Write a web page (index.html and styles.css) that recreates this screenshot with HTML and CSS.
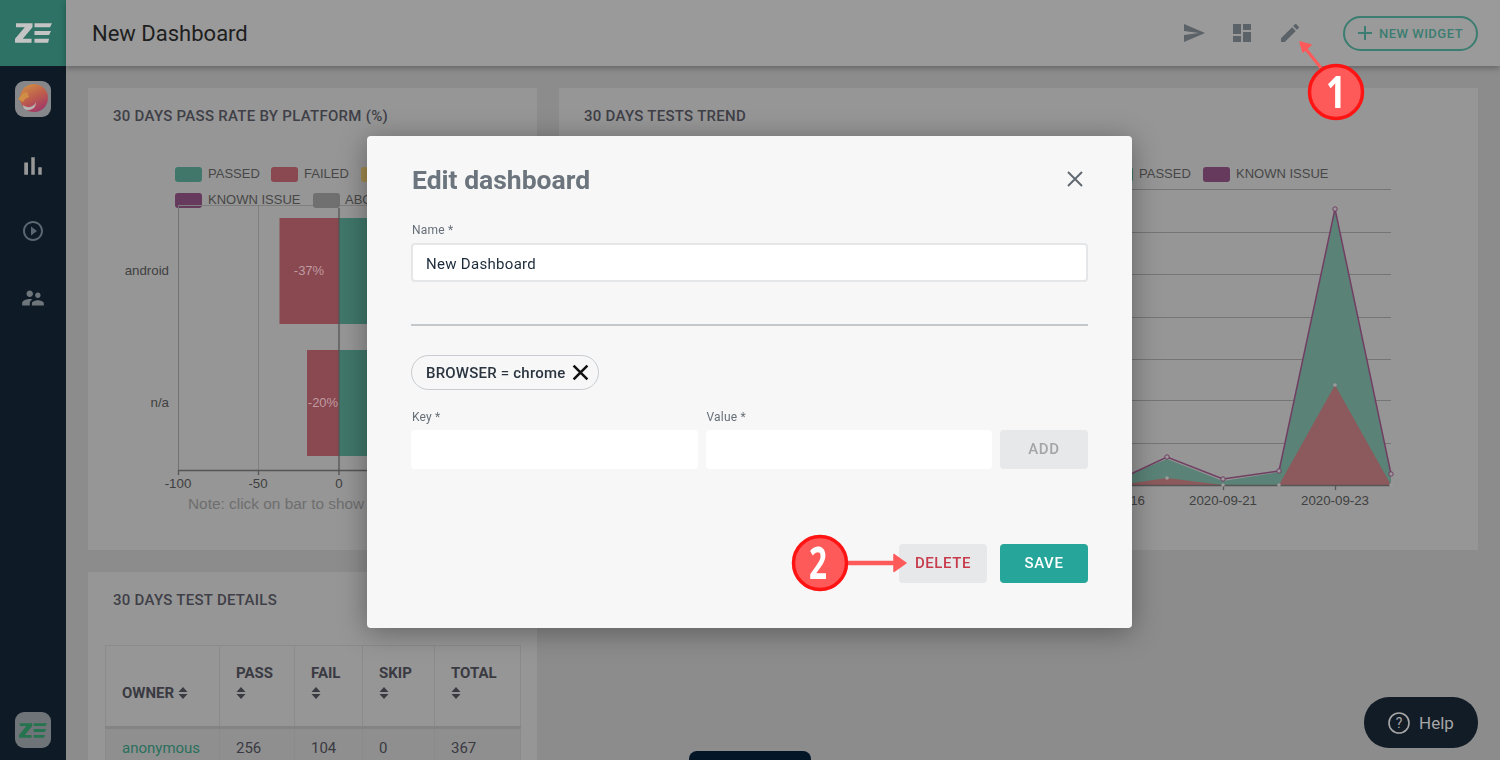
FILE: index.html
```html
<!DOCTYPE html>
<html>
<head>
    <title>New Dashboard</title>
    <link rel="stylesheet" href="styles.css">
</head>
<body>
    <aside class="sidebar">
        <div class="brand">
            <svg class="ze-logo" viewBox="0 0 38 20"><path d="M1 0h17v4L8 16h9v4H0v-4L10 4H1zM20 0h18l-2 4H20zM20 8h17l-2 4H20zM20 16h15l-1 4H20z"/></svg>
        </div>
        <div class="nav-item">
            <div class="project-logo">
                <svg viewBox="0 0 36 36">
                    <defs>
                        <linearGradient id="lion" x1="0.2" y1="0" x2="0.7" y2="1">
                            <stop offset="0" stop-color="#cf8d45"/>
                            <stop offset="0.5" stop-color="#bd5c4d"/>
                            <stop offset="1" stop-color="#9f3668"/>
                        </linearGradient>
                    </defs>
                    <circle cx="19" cy="17" r="14" fill="url(#lion)"/>
                    <path d="M3 18l5-6 4-1 2 5-4 2-2 3z" fill="#cf8d45"/>
                    <path d="M8 24c5 4 11 2 13-3 0 6-4 8-8 8-3 0-5-2-5-5z" fill="#b9b4b4"/>
                </svg>
            </div>
        </div>
        <div class="nav-item">
            <svg class="nav-icon nav-bar" viewBox="0 0 24 24"><path d="M5 9.2h3V19H5zM10.6 5h2.8v14h-2.8zm5.6 8H19v6h-2.8z"/></svg>
        </div>
        <div class="nav-item">
            <svg class="nav-icon" viewBox="0 0 24 24"><path d="M10 16.5l6-4.5-6-4.5v9zM12 2C6.48 2 2 6.48 2 12s4.48 10 10 10 10-4.48 10-10S17.52 2 12 2zm0 18c-4.41 0-8-3.59-8-8s3.59-8 8-8 8 3.59 8 8-3.59 8-8 8z"/></svg>
        </div>
        <div class="nav-item">
            <svg class="nav-icon nav-people" viewBox="0 0 24 24"><path d="M16.5 12c1.38 0 2.49-1.12 2.49-2.5S17.88 7 16.5 7C15.12 7 14 8.12 14 9.5s1.12 2.5 2.5 2.5zM9 11c1.66 0 2.99-1.34 2.99-3S10.66 5 9 5C7.34 5 6 6.34 6 8s1.34 3 3 3zm7.5 3c-1.83 0-5.5.92-5.5 2.75V19h11v-2.25c0-1.83-3.67-2.75-5.5-2.75zM9 13c-2.33 0-7 1.17-7 3.5V19h7v-2.25c0-.85.33-2.34 2.37-3.47C10.5 13.1 9.66 13 9 13z"/></svg>
        </div>
        <div class="company-logo">
            <svg viewBox="0 0 38 20"><path d="M1 0h17v4L8 16h9v4H0v-4L10 4H1zM20 0h18l-2 4H20zM20 8h17l-2 4H20zM20 16h15l-1 4H20z"/></svg>
        </div>
    </aside>

    <div class="main">
        <header class="topbar">
            <h1>New Dashboard</h1>
            <div class="topbar-actions">
                <svg class="action-icon" viewBox="0 0 24 24"><path d="M2.01 21L23 12 2.01 3 2 10l15 2-15 2z"/></svg>
                <svg class="action-icon" viewBox="0 0 24 24"><path d="M3 13h8V3H3v10zm0 8h8v-6H3v6zm10 0h8V11h-8v10zm0-18v6h8V3h-8z"/></svg>
                <svg class="action-icon" viewBox="0 0 24 24"><path d="M3 17.25V21h3.75L17.81 9.94l-3.75-3.75L3 17.25zM20.71 7.04c.39-.39.39-1.02 0-1.41l-2.34-2.34c-.39-.39-1.02-.39-1.41 0l-1.83 1.83 3.75 3.75 1.83-1.83z"/></svg>
                <button class="new-widget">
                    <svg viewBox="0 0 16 16"><path d="M8 1v14M1 8h14"/></svg>
                    NEW WIDGET
                </button>
            </div>
        </header>

        <div class="grid">
            <section class="card">
                <h2>30 days pass rate by platform (%)</h2>
                <svg class="chart" viewBox="88 140 449 400">
                    <g class="legend-text">
                        <rect x="175" y="167" width="27" height="15" rx="3" fill="#40776a"/>
                        <text x="208" y="178">PASSED</text>
                        <rect x="271" y="167" width="27" height="15" rx="3" fill="#8a4850"/>
                        <text x="304" y="178">FAILED</text>
                        <rect x="361" y="167" width="27" height="15" rx="3" fill="#a08a4d"/>
                        <rect x="175" y="193" width="27" height="15" rx="3" fill="#653a5c"/>
                        <text x="208" y="204">KNOWN ISSUE</text>
                        <text x="345" y="204">ABORTED</text>
                    </g>
                    <path class="grid-soft" d="M178 205.5H400M258.5 205V470"/>
                    <path class="grid-mid" d="M178.5 205V470"/>
                    <rect x="279.5" y="218" width="60" height="106" fill="#8a4850"/>
                    <rect x="339" y="218" width="40" height="106" fill="#40776a"/>
                    <rect x="307" y="350" width="32" height="106" fill="#8a4850"/>
                    <rect x="339" y="350" width="40" height="106" fill="#40776a"/>
                    <rect x="313" y="193" width="27" height="15" rx="3" fill="#707070"/>
                    <path class="axis" d="M339 208V470M178 470.5H400M178.5 470V475M258.5 470V475M339 470V475"/>
                    <g class="axis-text">
                        <text class="end" x="169" y="275">android</text>
                        <text class="end" x="169" y="407">n/a</text>
                        <text class="mid" x="178" y="488">-100</text>
                        <text class="mid" x="258" y="488">-50</text>
                        <text class="mid" x="339" y="488">0</text>
                    </g>
                    <text class="bar-label mid" x="309" y="275">-37%</text>
                    <text class="bar-label mid" x="323" y="407">-20%</text>
                    <text class="note" x="188" y="509">Note: click on bar to show details</text>
                </svg>
            </section>

            <section class="card">
                <h2>30 days tests trend</h2>
                <svg class="chart" viewBox="559 140 919 400">
                    <g class="legend-text">
                        <rect x="1106" y="167" width="27" height="15" rx="3" fill="#40776a"/>
                        <text x="1139" y="178">PASSED</text>
                        <rect x="1203" y="167" width="27" height="15" rx="3" fill="#653a5c"/>
                        <text x="1236" y="178">KNOWN ISSUE</text>
                    </g>
                    <path class="grid-line" d="M620 189.5H1391M620 232.5H1391M620 274.5H1391M620 317.5H1391M620 359.5H1391M620 400.5H1391M620 443.5H1391"/>
                    <polygon points="1110,485 1110,481 1133,473 1167,459 1223,481 1279,472 1335,211 1391,476 1391,485" fill="#5a8276"/>
                    <polygon points="1110,485 1133,483 1167,478 1223,485 1279,485 1335,385 1391,485" fill="#8c5a5c"/>
                    <polyline class="trend-line" points="1110,481 1133,473 1167,457 1223,479 1279,471 1335,209 1391,474"/>
                    <path class="axis" d="M1100 485.5H1391M1223.5 485V490M1335.5 485V490"/>
                    <g class="dot-known">
                        <circle cx="1167" cy="457" r="2.2"/>
                        <circle cx="1223" cy="479" r="2.2"/>
                        <circle cx="1279" cy="471" r="2.2"/>
                        <circle cx="1335" cy="209" r="2.2"/>
                        <circle cx="1391" cy="474" r="2.2"/>
                    </g>
                    <g class="dot-plain">
                        <circle cx="1167" cy="478" r="1.8"/>
                        <circle cx="1223" cy="485" r="1.8"/>
                        <circle cx="1279" cy="485" r="1.8"/>
                        <circle cx="1335" cy="385" r="1.8"/>
                        <circle cx="1391" cy="485" r="1.8"/>
                    </g>
                    <g class="axis-text">
                        <text class="mid" x="1111" y="505">2020-09-16</text>
                        <text class="mid" x="1223" y="505">2020-09-21</text>
                        <text class="mid" x="1335" y="505">2020-09-23</text>
                    </g>
                </svg>
            </section>

            <section class="card">
                <h2>30 days test details</h2>
                <table class="details">
                    <thead>
                        <tr>
                            <th class="col-owner">OWNER <svg class="sort" viewBox="0 0 10 14"><path d="M5 1l4.5 5H.5zM5 13L.5 8h9z"/></svg></th>
                            <th class="col-pass">PASS <svg class="sort" viewBox="0 0 10 14"><path d="M5 1l4.5 5H.5zM5 13L.5 8h9z"/></svg></th>
                            <th class="col-fail">FAIL <svg class="sort" viewBox="0 0 10 14"><path d="M5 1l4.5 5H.5zM5 13L.5 8h9z"/></svg></th>
                            <th class="col-skip">SKIP <svg class="sort" viewBox="0 0 10 14"><path d="M5 1l4.5 5H.5zM5 13L.5 8h9z"/></svg></th>
                            <th class="col-total">TOTAL <svg class="sort" viewBox="0 0 10 14"><path d="M5 1l4.5 5H.5zM5 13L.5 8h9z"/></svg></th>
                        </tr>
                    </thead>
                    <tbody>
                        <tr>
                            <td class="owner">anonymous</td>
                            <td>256</td>
                            <td>104</td>
                            <td>0</td>
                            <td>367</td>
                        </tr>
                    </tbody>
                </table>
            </section>
        </div>
    </div>

    <div class="bottom-tab"></div>
    <div class="help">
        <svg viewBox="0 0 24 24"><circle cx="12" cy="12" r="10"/><text x="12" y="17" text-anchor="middle">?</text></svg>
        Help
    </div>

    <div class="modal-layer">
        <div class="modal">
            <div class="modal-head">
                <h2>Edit dashboard</h2>
                <svg class="modal-close" viewBox="0 0 16 16"><path d="M1 1l14 14M15 1L1 15"/></svg>
            </div>

            <label class="field-label name-label">Name *</label>
            <input class="text-input name-input" type="text" value="New Dashboard">

            <hr class="divider">

            <div class="chip">
                BROWSER = chrome
                <svg viewBox="0 0 16 16"><path d="M1.5 1.5l13 13M14.5 1.5l-13 13"/></svg>
            </div>

            <div class="param-row">
                <div class="param-field">
                    <label class="field-label">Key *</label>
                    <input class="text-input plain" type="text">
                </div>
                <div class="param-field">
                    <label class="field-label">Value *</label>
                    <input class="text-input plain" type="text">
                </div>
                <button class="btn btn-add">ADD</button>
            </div>

            <div class="modal-foot">
                <button class="btn btn-delete">DELETE</button>
                <button class="btn btn-save">SAVE</button>
            </div>
        </div>
    </div>

    <!-- callouts drawn on top of the screenshot -->
    <svg class="callouts" viewBox="0 0 1500 760">
        <path class="callout-line" d="M1321 68L1305 48"/>
        <path class="callout-head" d="M1300 42l11 3-8 7z"/>
        <circle class="callout-dot" cx="1336" cy="92" r="26.5"/>
        <text class="callout-num" x="1336" y="108" textLength="20" lengthAdjust="spacingAndGlyphs">1</text>
        <path class="callout-line wide" d="M847 563H896"/>
        <path class="callout-head" d="M906 563l-12-8.5v17z"/>
        <circle class="callout-dot" cx="820" cy="563" r="26.5"/>
        <text class="callout-num" x="818" y="579" textLength="18" lengthAdjust="spacingAndGlyphs">2</text>
    </svg>
</body>
</html>
```

FILE: styles.css
```css
* {
    box-sizing: border-box;
}

body {
    display: flex;
    width: 1500px;
    height: 760px;
    margin: 0;
    overflow: hidden;
    background: #8c8c8c;
    font-family: Roboto, "Liberation Sans", sans-serif;
}

/* sidebar */
.sidebar {
    display: flex;
    flex-direction: column;
    flex: 0 0 66px;
    background: #0e1a25;
}

.brand {
    display: flex;
    align-items: center;
    justify-content: center;
    height: 66px;
    background: #2e7265;
}

.ze-logo {
    width: 37px;
    height: 20px;
    fill: #c4c4c4;
}

.nav-item {
    display: flex;
    align-items: center;
    justify-content: center;
    height: 66px;
}

.nav-icon {
    width: 24px;
    height: 24px;
    fill: #5b6670;
}

.nav-bar {
    width: 30px;
    height: 30px;
    margin-top: 2px;
    fill: #989898;
}

.nav-people {
    width: 26px;
    height: 26px;
    margin-top: 2px;
    fill: #6e767b;
}

.project-logo {
    width: 36px;
    height: 36px;
    border-radius: 9px;
    background: #85878a;
}

.project-logo svg {
    display: block;
}

.company-logo {
    display: flex;
    align-items: center;
    justify-content: center;
    width: 36px;
    height: 36px;
    margin: auto 0 12px 15px;
    border-radius: 9px;
    background: #6f7478;
}

.company-logo svg {
    width: 28px;
    height: 15px;
    fill: #25734f;
}

/* top bar */
.main {
    flex: 1;
    min-width: 0;
}

.topbar {
    position: relative;
    display: flex;
    align-items: center;
    justify-content: space-between;
    height: 66px;
    padding: 0 22px 0 26px;
    background: #9a9a9a;
    box-shadow: 0 2px 6px rgba(0,0,0,0.3);
}

.topbar h1 {
    margin: 0;
    color: #1e1e1e;
    font-size: 22px;
    font-weight: 400;
}

.topbar-actions {
    display: flex;
    align-items: center;
    gap: 24px;
}

.action-icon {
    width: 24px;
    height: 24px;
    fill: #5b6268;
}

.new-widget {
    display: flex;
    align-items: center;
    gap: 6px;
    width: 135px;
    height: 35px;
    margin-left: 17px;
    padding: 0 0 0 12px;
    border: 2px solid #3b7d70;
    border-radius: 18px;
    background: none;
    color: #3b7d70;
    font-family: Roboto, sans-serif;
    font-size: 13px;
    font-weight: 500;
    letter-spacing: 0.5px;
    white-space: nowrap;
}

.new-widget svg {
    flex: none;
    width: 16px;
    height: 16px;
    fill: none;
    stroke: #3b7d70;
    stroke-width: 2;
}

/* cards */
.grid {
    display: grid;
    grid-template-columns: 449px 919px;
    grid-template-rows: 462px auto;
    gap: 22px;
    padding: 22px;
}

.card {
    padding-top: 19px;
    background: #969696;
}

.card h2 {
    margin: 0;
    padding: 0 25px;
    color: #3f3f47;
    font-size: 15px;
    font-weight: 500;
    line-height: 18px;
    letter-spacing: 0.28px;
    text-transform: uppercase;
}

.chart {
    display: block;
    width: 100%;
    margin-top: 15px;
    font-family: "Liberation Sans", Arial, sans-serif;
    font-size: 13px;
}

.legend-text text {
    fill: #474747;
}

.axis-text text {
    fill: #404040;
    font-size: 13.3px;
}

.end {
    text-anchor: end;
}

.mid {
    text-anchor: middle;
}

.bar-label {
    fill: #bf9ca0;
}

.note {
    fill: #6e6e6e;
    font-size: 15.4px;
}

.grid-soft {
    fill: none;
    stroke: #7f7f7f;
}

.grid-mid {
    fill: none;
    stroke: #727272;
}

.grid-line {
    fill: none;
    stroke: #757575;
}

.axis {
    fill: none;
    stroke: #555;
    stroke-width: 1.3;
}

.trend-line {
    fill: none;
    stroke: #703e62;
    stroke-width: 1.5;
}

.dot-known circle {
    fill: #a09aa0;
    stroke: #703e62;
    stroke-width: 1;
}

.dot-plain circle {
    fill: #9c9c9c;
}

/* details table */
.details {
    width: 415px;
    margin: 36px 0 0 17px;
    border-collapse: collapse;
    table-layout: fixed;
    color: #3a3a42;
    font-size: 15px;
}

.details th,
.details td {
    border: 1px solid #8b8b8b;
    text-align: left;
}

.details th {
    height: 82px;
    padding: 17px 16px 23px;
    border-bottom: 3px solid #848484;
    font-weight: 700;
    line-height: 20px;
    vertical-align: bottom;
}

.details td {
    padding: 9px 16px;
    background: #8f8f8f;
    line-height: 20px;
}

.col-owner {
    width: 114px;
}

.col-pass {
    width: 75px;
}

.col-fail {
    width: 68px;
}

.col-skip {
    width: 72px;
}

.col-total {
    width: 86px;
}

.sort {
    width: 10px;
    height: 14px;
    fill: #3a3a42;
    vertical-align: -2px;
}

.details .owner {
    color: #2a6f5d;
}

/* floating bits */
.bottom-tab {
    position: fixed;
    top: 751px;
    left: 689px;
    width: 122px;
    height: 30px;
    border-radius: 8px 8px 0 0;
    background: #021628;
}

.help {
    position: fixed;
    top: 697px;
    left: 1364px;
    display: flex;
    align-items: center;
    gap: 8px;
    width: 114px;
    height: 51px;
    padding-left: 23px;
    border-radius: 25px;
    background: #121c26;
    color: #a6a6a6;
    font-size: 17px;
}

.help svg {
    width: 24px;
    height: 24px;
}

.help circle {
    fill: none;
    stroke: #a6a6a6;
    stroke-width: 1.6;
}

.help text {
    fill: #a6a6a6;
    font-size: 14px;
}

/* modal */
.modal-layer {
    position: fixed;
    top: 136px;
    left: 367px;
}

.modal {
    display: flex;
    flex-direction: column;
    width: 765px;
    height: 492px;
    padding: 20px 44px 45px;
    border-radius: 4px;
    background: #f7f7f7;
    box-shadow: 0 4px 28px rgba(0,0,0,0.35);
}

.modal-head {
    display: flex;
    align-items: center;
    justify-content: space-between;
    height: 46px;
}

.modal-head h2 {
    margin: 0 0 0 1px;
    color: #6c757d;
    font-size: 26.5px;
    font-weight: 700;
}

.modal-close {
    width: 16px;
    height: 16px;
    margin-right: 5px;
    fill: none;
    stroke: #5f6870;
    stroke-width: 1.9;
}

.field-label {
    display: block;
    margin-left: 1px;
    color: #666f78;
    font-size: 12px;
    line-height: 14px;
    letter-spacing: 0.2px;
}

.name-label {
    margin-top: 21px;
}

.text-input {
    display: block;
    width: 100%;
    padding: 0 13px;
    border: 2px solid #e4e6e8;
    border-radius: 4px;
    outline: none;
    background: #fff;
    color: #1c2b3a;
    font-family: Roboto, sans-serif;
    font-size: 15px;
    letter-spacing: 0.3px;
}

.name-input {
    height: 39px;
    margin-top: 6px;
    padding-top: 2px;
}

.divider {
    width: 100%;
    margin: 42px 0 29px;
    border: 0;
    border-top: 2px solid #c4c8cb;
}

.chip {
    display: flex;
    align-items: center;
    justify-content: space-between;
    width: 188px;
    height: 35px;
    padding: 0 9px 0 14px;
    border: 1.5px solid #c8ccd0;
    border-radius: 18px;
    color: #2b3540;
    font-size: 15px;
    font-weight: 500;
    letter-spacing: 0.2px;
}

.chip svg {
    width: 17px;
    height: 17px;
    fill: none;
    stroke: #111;
    stroke-width: 2.4;
}

.param-row {
    display: flex;
    align-items: flex-end;
    gap: 8px;
    margin-top: 20px;
}

.param-field {
    flex: 1;
}

.param-field .field-label {
    margin-bottom: 6px;
}

.plain {
    height: 39px;
    border: none;
}

.btn {
    flex: none;
    width: 88px;
    height: 39px;
    padding: 0 0 2px;
    border: none;
    border-radius: 4px;
    font-family: Roboto, sans-serif;
    font-size: 15px;
    font-weight: 500;
    letter-spacing: 0.6px;
}

.btn-add {
    background: #e7e8ea;
    color: #a3a5a8;
}

.modal-foot {
    display: flex;
    justify-content: flex-end;
    gap: 13px;
    margin-top: auto;
}

.btn-delete {
    background: #e7e8ea;
    color: #c73a4c;
}

.btn-save {
    background: #26a69a;
    color: #fff;
}

/* callouts */
.callouts {
    position: fixed;
    top: 0;
    left: 0;
    width: 1500px;
    height: 760px;
    pointer-events: none;
}

.callout-line {
    fill: none;
    stroke: #ff5a5a;
    stroke-width: 3;
}

.callout-line.wide {
    stroke-width: 4.5;
}

.callout-head {
    fill: #ff5a5a;
    stroke: #ff5a5a;
    stroke-linejoin: round;
    stroke-width: 1.5;
}

.callout-dot {
    fill: #ff5a5a;
    stroke: #ff1414;
    stroke-width: 3.5;
}

.callout-num {
    fill: #fff;
    font-family: "Open Sans", Roboto, sans-serif;
    font-size: 44px;
    font-weight: 700;
    text-anchor: middle;
}
```
